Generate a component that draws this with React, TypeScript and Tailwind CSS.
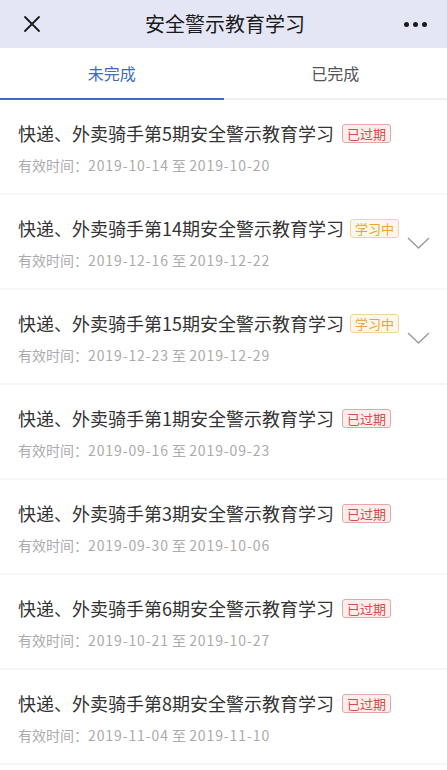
import React from "react";

type Item = {
  no: number;
  start: string;
  end: string;
  status: "expired" | "learning";
};

const items: Item[] = [
  { no: 5, start: "2019-10-14", end: "2019-10-20", status: "expired" },
  { no: 14, start: "2019-12-16", end: "2019-12-22", status: "learning" },
  { no: 15, start: "2019-12-23", end: "2019-12-29", status: "learning" },
  { no: 1, start: "2019-09-16", end: "2019-09-23", status: "expired" },
  { no: 3, start: "2019-09-30", end: "2019-10-06", status: "expired" },
  { no: 6, start: "2019-10-21", end: "2019-10-27", status: "expired" },
  { no: 8, start: "2019-11-04", end: "2019-11-10", status: "expired" },
];

const font = {
  fontFamily: '"PingFang SC", "Noto Sans CJK SC", "Noto Sans", sans-serif',
};

const Badge = ({ status }: { status: Item["status"] }) =>
  status === "expired" ? (
    <span className="ml-2 inline-flex h-[19px] items-center rounded-[3px] border border-[#eaa5a5] bg-[#fdeeee] px-[4px] text-[13px] leading-none text-[#d84b4b]">
      已过期
    </span>
  ) : (
    <span className="ml-[6px] inline-flex h-[19px] items-center rounded-[3px] border border-[#f3d49a] bg-[#fff8e8] px-[4px] text-[13px] leading-none text-[#eba236]">
      学习中
    </span>
  );

const Row = ({ item }: { item: Item }) => (
  <div className="relative h-[95px] border-b-2 border-[#f6f6f6] px-[18px] pt-[21px]">
    <div className="flex items-center">
      <span className="text-[18px] leading-[24px] text-[#333]">
        快递、外卖骑手第{item.no}期安全警示教育学习
      </span>
      <Badge status={item.status} />
    </div>
    <div className="mt-[10px] text-[14px] leading-[20px] text-[#ababab]">
      有效时间：
      <span className="tracking-[0.9px]">{item.start}</span> 至{" "}
      <span className="tracking-[0.9px]">{item.end}</span>
    </div>
    {item.status === "learning" && (
      <svg
        className="absolute right-[17px] top-[42px]"
        width="23"
        height="12"
        viewBox="0 0 23 12"
        fill="none"
        stroke="#9a9a9a"
        strokeWidth="1.4"
      >
        <path d="M1 1l10.5 10L22 1" />
      </svg>
    )}
  </div>
);

export default function App() {
  return (
    <div className="h-[770px] w-[447px] overflow-hidden bg-white" style={font}>
      <div className="flex h-[48px] items-center justify-between bg-[#e4e6f6] pl-[22px] pr-[20px]">
        <svg width="20" height="20" viewBox="0 0 20 20" stroke="#1a1a1a" strokeWidth="1.8" strokeLinecap="round">
          <path d="M3 3l14 14M17 3L3 17" />
        </svg>
        <span className="pl-[4px] text-[20px] text-[#1a1a1a]">安全警示教育学习</span>
        <div className="flex gap-[4px]">
          <span className="h-[5px] w-[5px] rounded-full bg-[#1a1a1a]" />
          <span className="h-[5px] w-[5px] rounded-full bg-[#1a1a1a]" />
          <span className="h-[5px] w-[5px] rounded-full bg-[#1a1a1a]" />
        </div>
      </div>
      <div className="flex h-[52px] border-b-2 border-[#f0f0f0]">
        <div className="-mb-[2px] flex flex-1 items-center justify-center border-b-2 border-[#3e6cbb] text-[16px] text-[#3e6cbb]">
          未完成
        </div>
        <div className="flex flex-1 items-center justify-center text-[16px] text-[#555]">
          已完成
        </div>
      </div>
      {items.map((item) => (
        <Row key={item.no} item={item} />
      ))}
    </div>
  );
}
